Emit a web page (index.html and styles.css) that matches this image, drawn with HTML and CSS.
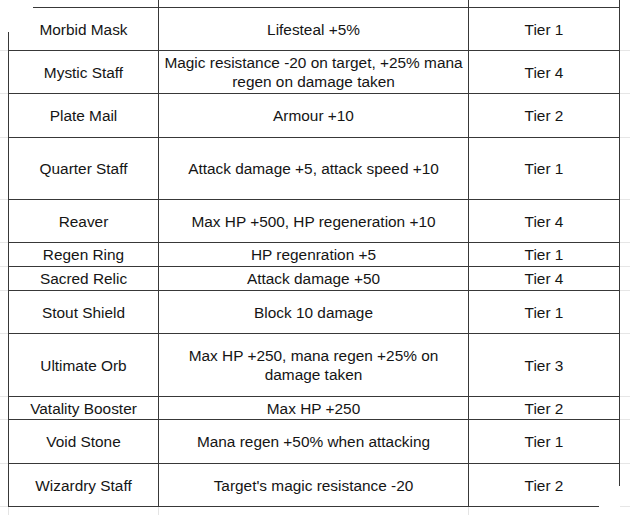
FILE: index.html
```html
<!DOCTYPE html>
<html>
<head>
<meta charset="utf-8">
<link rel="stylesheet" href="styles.css">
</head>
<body>
<div class="sheet">
  <div class="row stub-top"><div class="gut"></div><div class="c1"></div><div class="c2"></div><div class="c3"></div><div class="gut"></div></div>

  <div class="row first h44"><div class="gut"></div><div class="c1 mask-tl">Morbid Mask</div><div class="c2">Lifesteal +5%</div><div class="c3">Tier 1</div><div class="gut"></div></div>
  <div class="row h43"><div class="gut"></div><div class="c1">Mystic Staff</div><div class="c2">Magic resistance -20 on target, +25% mana<br>regen on damage taken</div><div class="c3">Tier 4</div><div class="gut"></div></div>
  <div class="row h44"><div class="gut"></div><div class="c1">Plate Mail</div><div class="c2">Armour +10</div><div class="c3">Tier 2</div><div class="gut"></div></div>
  <div class="row h62"><div class="gut"></div><div class="c1">Quarter Staff</div><div class="c2">Attack damage +5, attack speed +10</div><div class="c3">Tier 1</div><div class="gut"></div></div>
  <div class="row h43"><div class="gut"></div><div class="c1">Reaver</div><div class="c2">Max HP +500, HP regeneration +10</div><div class="c3">Tier 4</div><div class="gut"></div></div>
  <div class="row h24"><div class="gut"></div><div class="c1">Regen Ring</div><div class="c2">HP regenration +5</div><div class="c3">Tier 1</div><div class="gut"></div></div>
  <div class="row h24"><div class="gut"></div><div class="c1">Sacred Relic</div><div class="c2">Attack damage +50</div><div class="c3">Tier 4</div><div class="gut"></div></div>
  <div class="row h43"><div class="gut"></div><div class="c1">Stout Shield</div><div class="c2">Block 10 damage</div><div class="c3">Tier 1</div><div class="gut"></div></div>
  <div class="row h63"><div class="gut"></div><div class="c1">Ultimate Orb</div><div class="c2">Max HP +250, mana regen +25% on<br>damage taken</div><div class="c3">Tier 3</div><div class="gut"></div></div>
  <div class="row h23"><div class="gut"></div><div class="c1">Vatality Booster</div><div class="c2">Max HP +250</div><div class="c3">Tier 2</div><div class="gut"></div></div>
  <div class="row h44"><div class="gut"></div><div class="c1">Void Stone</div><div class="c2">Mana regen +50% when attacking</div><div class="c3">Tier 1</div><div class="gut"></div></div>
  <div class="row h43"><div class="gut"></div><div class="c1">Wizardry Staff</div><div class="c2">Target's magic resistance -20</div><div class="c3 mask-br">Tier 2</div><div class="gut"></div></div>

  <div class="row stub-bottom"><div class="gut"></div><div class="c1"></div><div class="c2"></div><div class="c3"></div><div class="gut"></div></div>
</div>
</body>
</html>
```

FILE: styles.css
```css
* {
  box-sizing: border-box;
}

html, body {
  margin: 0;
  padding: 0;
  background: #ffffff;
}

body {
  width: 630px;
  height: 515px;
  overflow: hidden;
  font-family: "Liberation Sans", Arial, sans-serif;
  font-size: 15.4px;
  color: #151515;
}

.sheet {
  display: flex;
  flex-direction: column;
}

.row {
  display: grid;
  grid-template-columns: 8px 151px 310px 151px 10px;
}

.row > div {
  display: flex;
  align-items: center;
  justify-content: center;
  text-align: center;
  line-height: 19px;
  white-space: nowrap;
}

.row .gut {
  border-bottom: 1px solid #e6e6e6;
}

.row .c1 {
  border-left: 1px solid #383838;
  border-right: 1px solid #383838;
  border-bottom: 1px solid #383838;
}

.row .c2,
.row .c3 {
  border-right: 1px solid #383838;
  border-bottom: 1px solid #383838;
}

.row.first .c1,
.row.first .c2,
.row.first .c3 {
  border-top: 1px solid #383838;
}

.stub-top {
  height: 7px;
}

.stub-top .c1 {
  border-left: none;
}

.stub-top .gut,
.stub-top .c1,
.stub-top .c2,
.stub-top .c3 {
  border-bottom: none;
}

.stub-bottom {
  height: 8px;
}

.stub-bottom .gut,
.stub-bottom .c1,
.stub-bottom .c2,
.stub-bottom .c3 {
  border-bottom: none;
}

.stub-bottom .c1 {
  border-left-color: #e4e4e4;
  border-right-color: #e4e4e4;
}

.stub-bottom .c2 {
  border-right-color: #e4e4e4;
}

.stub-bottom .c3 {
  border-right: none;
}

.h23 { height: 23px; }
.h24 { height: 24px; }
.h43 { height: 43px; }
.h44 { height: 44px; }
.h62 { height: 62px; }
.h63 { height: 63px; }

.mask-tl,
.mask-br {
  position: relative;
}

.mask-tl::before {
  content: "";
  position: absolute;
  top: -1px;
  left: -1px;
  width: 25px;
  height: 25px;
  background: #ffffff;
}

.mask-br::after {
  content: "";
  position: absolute;
  right: -1px;
  bottom: -1px;
  width: 21px;
  height: 21px;
  background: #ffffff;
}
```
